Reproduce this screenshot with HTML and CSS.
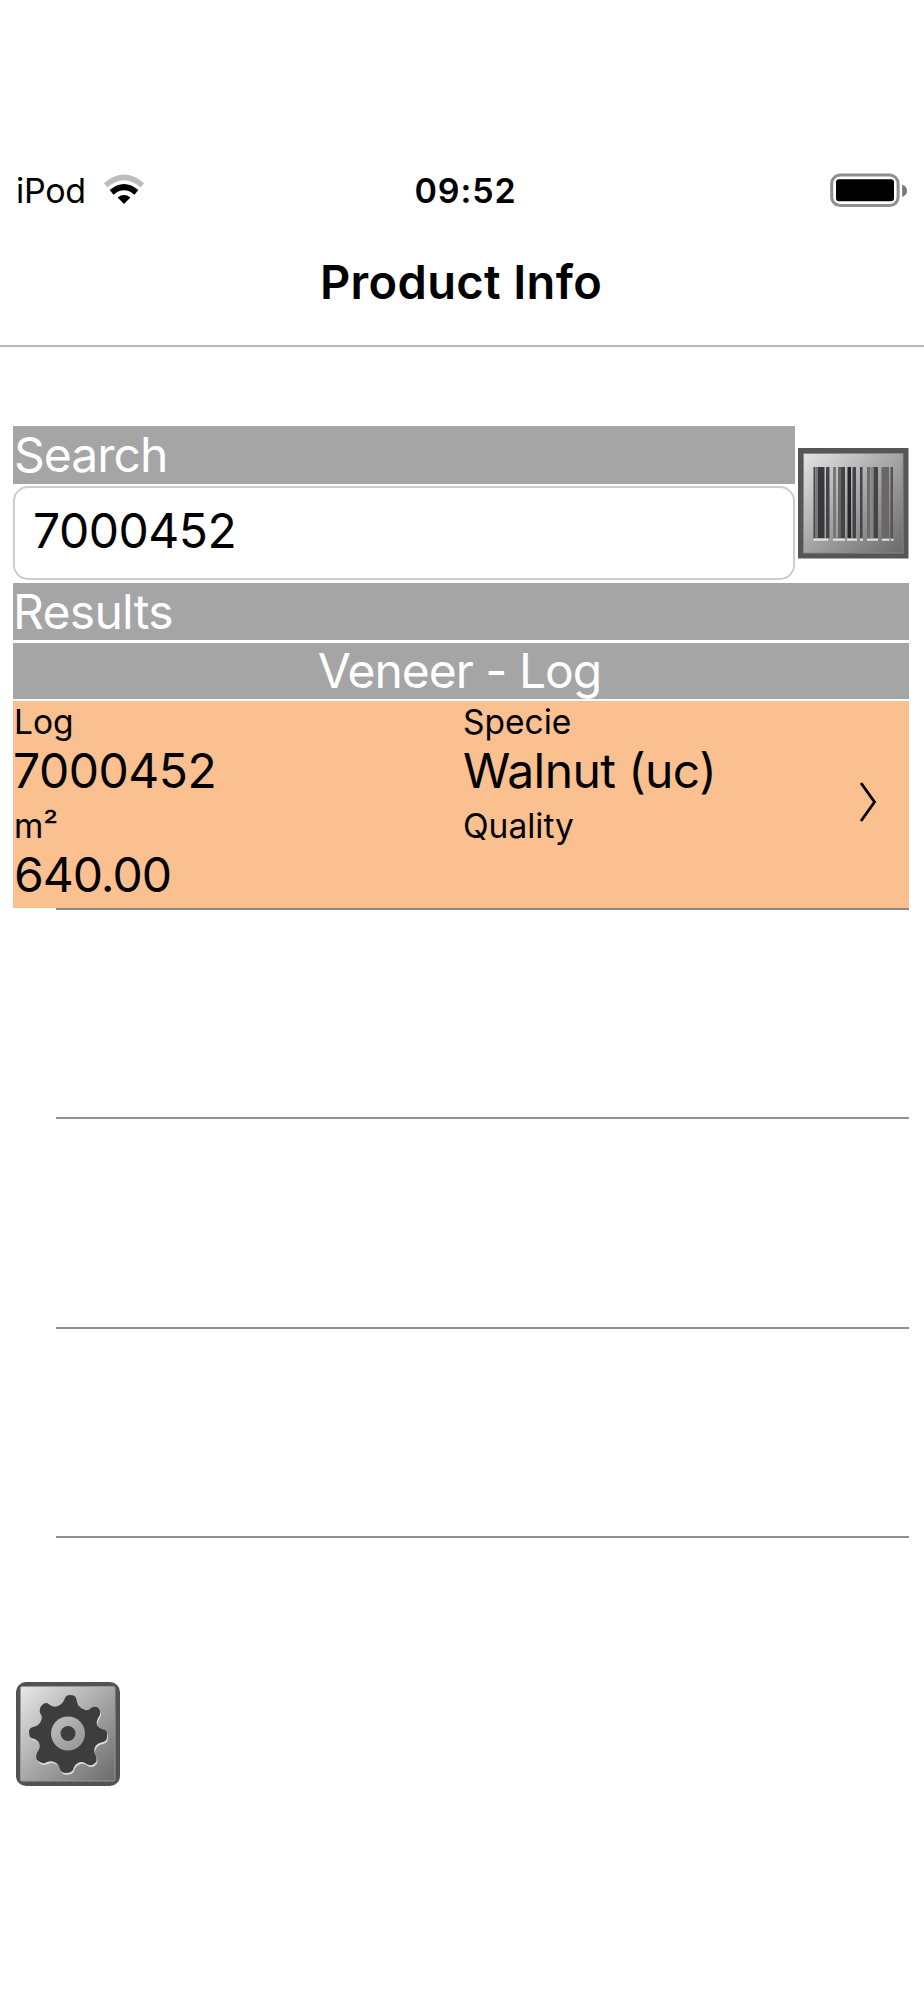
FILE: index.html
```html
<!DOCTYPE html>
<html lang="en">
  <head>
    <meta charset="UTF-8" />
    <meta name="viewport" content="width=device-width, initial-scale=1.0" />
    <title>Product Info</title>
    <link rel="stylesheet" href="styles.css">
  </head>
  <body>
    <!-- Status bar -->
    <div class="status-bar">
      <div class="carrier">
        <span class="carrier-name">iPod</span>
        <svg class="wifi" width="42" height="32" viewBox="0 0 42 32">
          <path d="M2.6 11.2Q21 -4.4 39.4 11.2" fill="none" stroke="#bdbdbd" stroke-width="5.4" />
          <path d="M8.6 18.4Q21 8 33.4 18.4" fill="none" stroke="#000" stroke-width="6" />
          <path d="M14.6 23.4Q21 18.6 27.4 23.4L21 30Z" fill="#000" />
        </svg>
      </div>
      <span class="time">09:52</span>
      <svg class="battery" width="80" height="36" viewBox="0 0 80 36">
        <rect x="2.7" y="3" width="66.4" height="30.6" rx="8.5" fill="#fff" stroke="#8e8e8e" stroke-width="3" />
        <rect x="7" y="7.3" width="58" height="22" rx="3" fill="#000" />
        <path d="M73.2 12.5Q78 14.5 78 18.8T73.2 25Z" fill="#777" />
      </svg>
    </div>

    <h1 class="title">Product Info</h1>

    <div class="content">
      <!-- Search -->
      <div class="search">
        <div class="search-field">
          <label class="bar" for="search">Search</label>
          <input type="text" id="search" value="7000452" />
        </div>
        <button class="scan" aria-label="Scan barcode">
          <svg width="111" height="111" viewBox="0 0 111 111">
            <defs>
              <linearGradient id="scan-bg" x1="0" y1="0" x2="1" y2="1">
                <stop offset="0" stop-color="#e4e4e4" />
                <stop offset="0.45" stop-color="#aaa" />
                <stop offset="1" stop-color="#6a6a6a" />
              </linearGradient>
            </defs>
            <rect width="110.5" height="110.5" fill="#565656" />
            <rect x="5.5" y="5.5" width="99.5" height="99.5" fill="url(#scan-bg)" stroke="#888" />
            <path d="M15.5 91.7h14.5M35 91.7h12M49 91.7h10M62 91.7h3M69 91.7h11M84 91.7h7.5M93 91.7h2.5" stroke="#e2e2e2" stroke-width="2" />
            <g fill="#454347">
              <rect x="15.5" y="19" width="2" height="71" />
              <rect x="18" y="19" width="2" height="71" fill="#777" />
              <rect x="20" y="19" width="6.5" height="71" fill="#38383a" />
              <rect x="28" y="19" width="3.5" height="71" />
              <rect x="35" y="19" width="3" height="71" fill="#777" />
              <rect x="40" y="19" width="2.5" height="71" fill="#666" />
              <rect x="42.5" y="19" width="4.5" height="71" />
              <rect x="49.5" y="19" width="3.5" height="71" fill="#252525" />
              <rect x="54.5" y="19" width="3.5" height="71" />
              <rect x="62" y="19" width="2.5" height="71" />
              <rect x="69" y="19" width="3" height="71" fill="#6c6c6c" />
              <rect x="72.5" y="19" width="2.5" height="71" fill="#858585" />
              <rect x="75.5" y="19" width="4.5" height="71" />
              <rect x="83.5" y="19" width="7.5" height="71" fill="#69676b" />
              <rect x="92.5" y="19" width="2.5" height="71" fill="#555" />
            </g>
          </svg>
        </button>
      </div>

      <!-- Results -->
      <div class="bar results-bar">Results</div>
      <div class="bar group-bar">Veneer - Log</div>

      <div class="result">
        <div class="column">
          <div class="label">Log</div>
          <div class="value number">7000452</div>
          <div class="label">m²</div>
          <div class="value amount">640.00</div>
        </div>
        <div class="column">
          <div class="label">Specie</div>
          <div class="value">Walnut (uc)</div>
          <div class="label">Quality</div>
          <div class="value"></div>
        </div>
        <svg class="chevron" width="20" height="44" viewBox="0 0 20 44">
          <path d="M3 3L16.5 22L3 41" fill="none" stroke="#000" stroke-width="2.8" />
        </svg>
      </div>
      <div class="row first"></div>
      <div class="row"></div>
      <div class="row"></div>

      <button class="settings" aria-label="Settings">
        <svg width="105" height="105" viewBox="0 0 105 105">
          <defs>
            <linearGradient id="gear-bg" x1="0" y1="0" x2="1" y2="1">
              <stop offset="0" stop-color="#e8e8e8" />
              <stop offset="0.5" stop-color="#a8a8a8" />
              <stop offset="1" stop-color="#6b6b6b" />
            </linearGradient>
            <linearGradient id="hub-bg" x1="0" y1="0" x2="1" y2="1">
              <stop offset="0" stop-color="#c0c0c0" />
              <stop offset="1" stop-color="#929292" />
            </linearGradient>
            <path id="gear" d="M49 16Q50 13 54 13Q59 13 60 16L62 23Q65 27 69 28Q72 29 75 26Q80 23 83 27Q86 31 82 36Q80 40 81 43Q83 47 89 48Q92 50 91 55Q91 59 87 60Q81 61 79 65Q77 69 80 74Q82 79 78 82Q74 85 69 81Q65 79 62 81Q58 83 57 88Q55 91 50 91Q45 91 44 87Q42 81 38 80Q34 78 29 81Q25 82 21 78Q19 74 22 69Q25 65 23 61Q21 57 15 56Q13 54 13 50Q13 46 17 45Q23 44 25 39Q27 35 24 31Q23 26 26 23Q30 19 34 23Q38 26 42 24Q47 22 49 16Z" />
          </defs>
          <rect width="104" height="104" rx="10" fill="#525252" />
          <rect x="4.5" y="4.5" width="94.5" height="94.5" rx="1.5" fill="url(#gear-bg)" stroke="#999" />
          <use href="#gear" fill="#ddd" transform="translate(0.8 1.8)" />
          <use href="#gear" fill="#3d3d3d" />
          <circle cx="52" cy="51.5" r="17" fill="url(#hub-bg)" />
          <circle cx="52" cy="51.5" r="7.5" fill="#3d3d3d" />
        </svg>
      </button>
    </div>
  </body>
</html>
```

FILE: styles.css
```css
* {
  margin: 0;
  padding: 0;
  box-sizing: border-box;
}
body {
  min-height: 2000px;
  background: #fff;
  color: #000;
  font-family: Inter, "Liberation Sans", sans-serif;
}
button {
  border: none;
  background: none;
  display: block;
}
svg {
  display: block;
}

.status-bar {
  display: grid;
  grid-template-columns: 1fr auto 1fr;
  align-items: center;
  height: 60px;
  margin-top: 160px;
  padding: 0 15px 0 16px;
  font-size: 34px;
}
.carrier {
  display: flex;
  align-items: center;
  gap: 17px;
}
.carrier-name {
  letter-spacing: -0.3px;
}
.time {
  padding-left: 6px;
  font-weight: 600;
  letter-spacing: 0.9px;
}
.battery {
  justify-self: end;
}

.title {
  height: 127px;
  padding-top: 34px;
  padding-right: 2px;
  border-bottom: 2px solid #b8b8b8;
  font-size: 47px;
  font-weight: 600;
  line-height: 56px;
  letter-spacing: 0.35px;
  text-align: center;
}

.content {
  padding: 79px 15px 0 13px;
}
.bar {
  display: block;
  height: 57px;
  background: #a5a5a5;
  color: #fff;
  font-size: 48px;
  line-height: 57px;
  letter-spacing: -1px;
}
.search {
  display: flex;
  align-items: center;
  gap: 3px;
}
.search-field {
  flex: 1;
}
.search-field .bar {
  height: 58px;
  padding-left: 1px;
  line-height: 58px;
}
.search-field input {
  display: block;
  width: 100%;
  height: 94px;
  margin-top: 2px;
  padding: 0 18px 6px;
  border: 2px solid #ccc;
  border-radius: 15px;
  font: inherit;
  font-size: 48px;
  letter-spacing: -0.5px;
}
.scan {
  width: 111px;
}
.results-bar {
  margin-top: 3px;
  letter-spacing: -0.7px;
}
.group-bar {
  margin-top: 3px;
  height: 56px;
  padding-right: 3px;
  line-height: 56px;
  text-align: center;
}

.result {
  display: flex;
  height: 207px;
  margin-top: 2px;
  background: #fac090;
}
.column {
  width: 449px;
  padding-left: 1px;
}
.column + .column {
  width: 396px;
}
.label {
  height: 43px;
  font-size: 33.5px;
  line-height: 43px;
}
.value {
  height: 61px;
  font-size: 48px;
  line-height: 54px;
  letter-spacing: -0.6px;
}
.number {
  margin-left: -1px;
  letter-spacing: -0.5px;
}
.amount {
  letter-spacing: -1px;
}
.chevron {
  margin-top: 79px;
}
.row {
  height: 209.5px;
  margin-left: 43px;
  border-bottom: 2px solid #909090;
}
.row.first {
  height: 211px;
  border-top: 2px solid #888;
}

.settings {
  margin: 144px 0 0 3px;
}
```
